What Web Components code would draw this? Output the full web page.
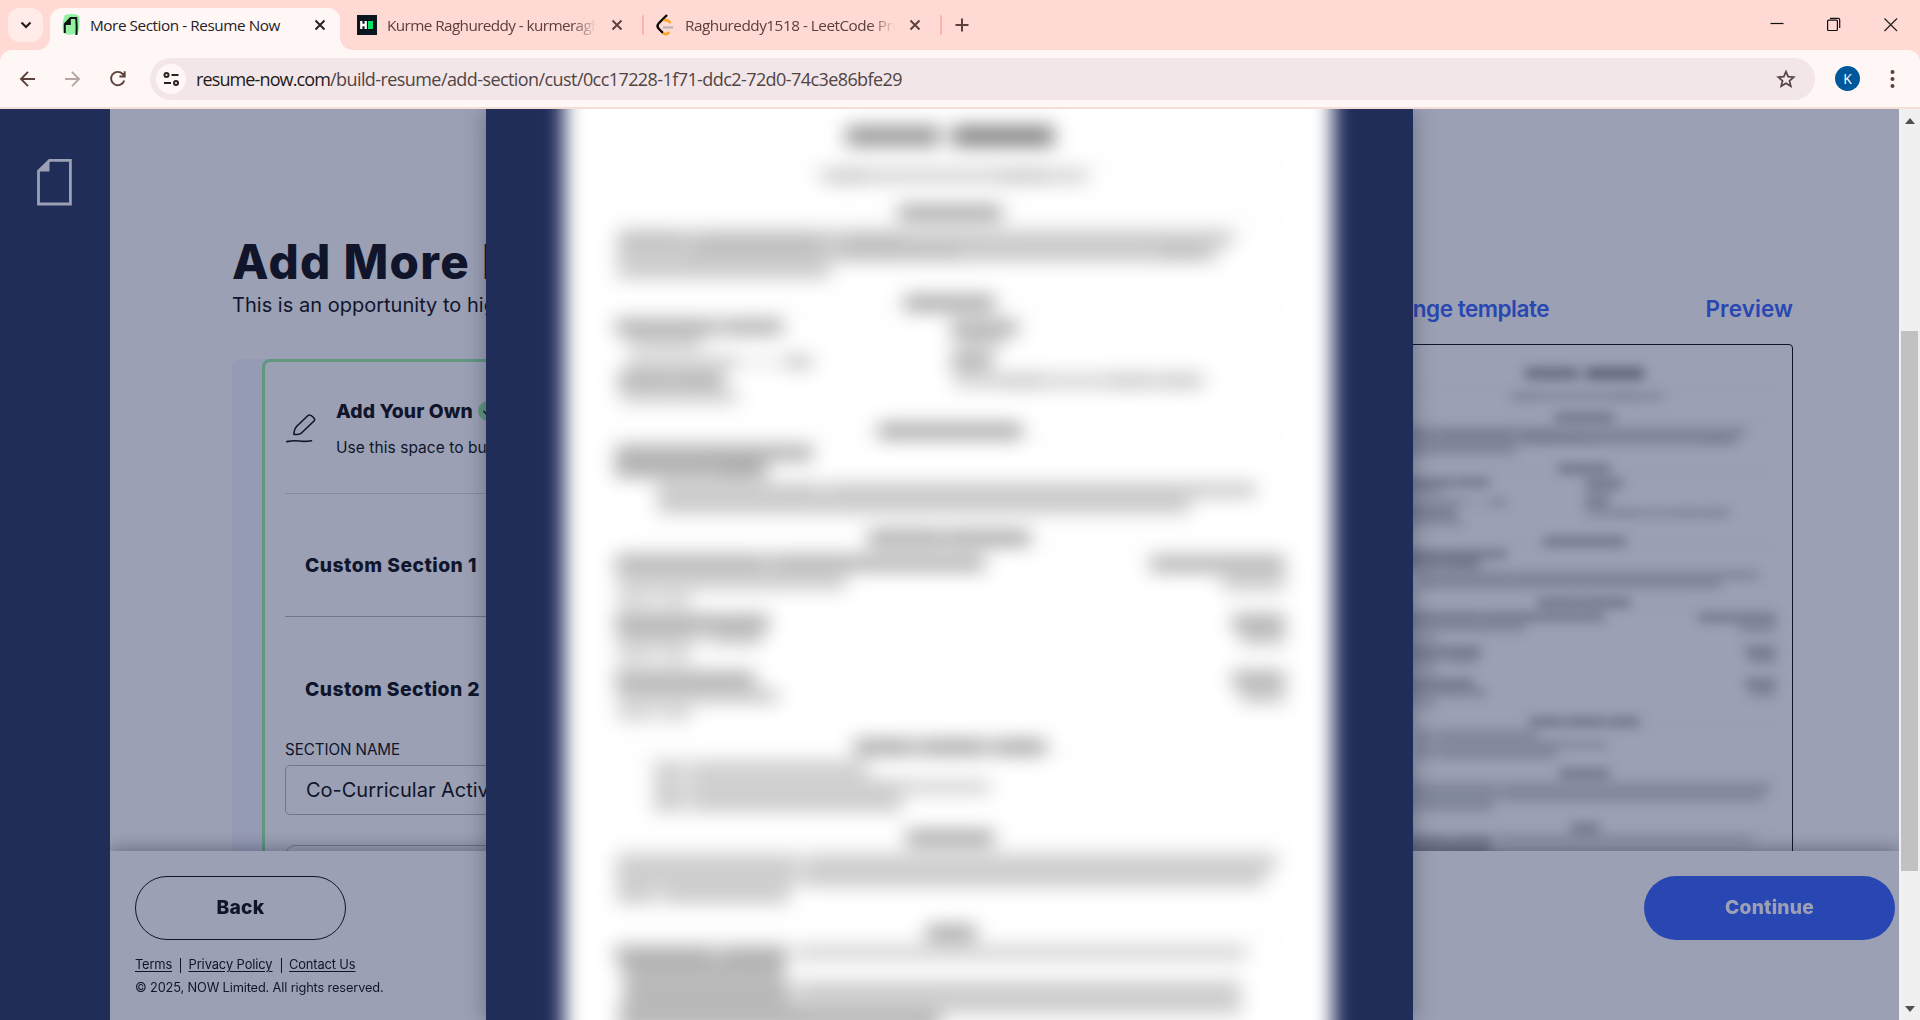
<!DOCTYPE html>
<html lang="en">
<head>
<meta charset="utf-8">
<title>More Section - Resume Now</title>
<style>
html,body{margin:0;padding:0;height:100%;overflow:hidden;background:#9ba0b4}
body{font-family:Inter,"Liberation Sans",sans-serif;color:#10152b}
</style>
</head>
<body>
<app-window></app-window>
<script>
const define=(name,html,after)=>{
  const t=document.createElement('template');
  t.innerHTML=html;
  customElements.define(name,class extends HTMLElement{
    constructor(){super();this.attachShadow({mode:'open'}).append(t.content.cloneNode(true));}
    connectedCallback(){if(after)after.call(this,this.shadowRoot);}
  });
};

/* One line of text, tracked so that it fills the width given in "w". */
define('fit-text',`<style>:host{display:inline-block;white-space:pre;flex:none}span{display:inline-block;text-decoration:inherit;text-underline-offset:inherit}</style><span><slot></slot></span>`,function(root){
  const w=+this.getAttribute('w'),n=this.textContent.length;
  const s=root.querySelector('span');
  if(w&&n){
    const natural=s.getBoundingClientRect().width;
    s.style.letterSpacing=((w-natural)/n)+'px';
  }
});

define('browser-tab',`<style>
:host{display:flex;align-items:center;height:42px;width:290px;box-sizing:border-box;padding:0 11px;color:#5b403c;font:15.300px/34px "Open Sans",sans-serif;position:relative;flex:none}
:host([active]){background:#fff7f5;color:#27201f;border-radius:12px 12px 0 0}
:host([active])::before,:host([active])::after{content:"";position:absolute;bottom:0;width:12px;height:12px}
:host([active])::before{left:-12px;background:radial-gradient(circle at 0 0,transparent 11.5px,#fff7f5 12px)}
:host([active])::after{right:-12px;background:radial-gradient(circle at 100% 0,transparent 11.5px,#fff7f5 12px)}
.icon{width:20px;height:34px;display:flex;align-items:center;justify-content:center;margin-bottom:8px}
.label{width:210px;margin:0 0 8px 9px;height:34px;overflow:hidden}
:host(:not([active])) .label{-webkit-mask-image:linear-gradient(90deg,#000 88%,transparent);mask-image:linear-gradient(90deg,#000 88%,transparent);margin-left:10px}
.x{margin:0 0 8px 14px;width:12px;height:12px}
</style><div class="icon"><slot name="icon"></slot></div><div class="label"><slot></slot></div>
<svg class="x" viewBox="0 0 12 12"><path d="M1.500 1.500l9 9M10.500 1.500l-9 9" stroke="currentColor" stroke-width="1.900"/></svg>`);

define('browser-chrome',`<style>
:host{display:block;height:109px;background:#ffd9d3}
.tabs{height:50px;display:flex;align-items:flex-start;padding-top:8px;box-sizing:border-box;position:relative}
.search{width:35px;height:34px;margin:0 7px 0 8px;border-radius:12px;background:#ffece9;display:flex;align-items:center;justify-content:center}
.sep{width:2px;height:20px;background:#ffb3a8;margin-top:7px;border-radius:1px}
.plus{margin:10px 0 0 13px}
.win{margin-left:auto;display:flex;padding:8px 22px 0 0;gap:43px}
.bar{height:57px;background:#fff7f5;border-radius:12px 12px 0 0;display:flex;align-items:center;padding:0 18px;box-sizing:border-box}
.line{height:2px;background:#f5ddd8}
.nav{display:flex;gap:25px;width:132px}
.omni{flex:none;width:1665px;height:42px;border-radius:21px;background:#f2e6e8;display:flex;align-items:center;box-sizing:border-box;padding:0 19px 0 6px;color:#514443;font:18px/40px "Open Sans",sans-serif}
.tune{width:30px;height:30px;border-radius:50%;background:#fff7f5;display:flex;align-items:center;justify-content:center;margin-right:10px}
.dom{color:#1f1a1a}
.star{margin-left:auto}
.k{width:25px;height:25px;border-radius:50%;background:#01579b;color:#fff;font:14px/25px "Open Sans",sans-serif;text-align:center;margin:0 30px 0 20px}
</style>
<div class="tabs">
 <div class="search"><svg width="12" height="12" viewBox="0 0 12 12"><path d="M1.500 3.500L6 8l4.500-4.500" fill="none" stroke="#241c1b" stroke-width="2.200"/></svg></div>
 <browser-tab active><svg slot="icon" width="20" height="24" viewBox="0 0 20 24"><path d="M4 2q7-2 13 0 2 2 1.500 9T17 20q-6 3-13 1-3-2-2.500-9T4 2z" fill="#92f0a2"/><path d="M3.800 20V11.200L9.500 5h5.700q.8 8 .3 17" fill="none" stroke="#0b1410" stroke-width="2"/><path d="M3.500 11L9.800 4.500V12H3.500z" fill="#0b1410"/></svg><fit-text w="190">More Section - Resume Now</fit-text></browser-tab>
 <browser-tab style="margin-left:7px;width:295px;padding-left:10px"><svg slot="icon" width="20" height="20" viewBox="0 0 20 20"><path d="M0 0h20v20H0z" fill="#0b151d"/><path d="M4.300 6v8M8.700 6v8M4 10h5" stroke="#fff" stroke-width="2.300"/><path d="M11 6h5v8h-5z" fill="#05e066"/></svg><fit-text w="213">Kurme Raghureddy - kurmeragh</fit-text></browser-tab>
 <div class="sep"></div>
 <browser-tab style="width:296px;padding-left:11px"><svg slot="icon" width="18" height="24" viewBox="0 0 18 24"><path d="M11 2L3 10q-3 3 0 6l4 4" fill="none" stroke="#080808" stroke-width="2.400"/><path d="M7 20q3 2.600 6.500-.8M8 7.500q3-1.500 6.500 2.500" fill="none" stroke="#ffa116" stroke-width="2.400"/><path d="M7 14.500h10" stroke="#b9b4b3" stroke-width="2.200"/></svg><fit-text w="216">Raghureddy1518 - LeetCode Pro</fit-text></browser-tab>
 <div class="sep"></div>
 <svg class="plus" width="14" height="14" viewBox="0 0 14 14"><path d="M7 .5v13M.5 7h13" stroke="#5b403c" stroke-width="2"/></svg>
 <div class="win">
  <svg width="14" height="16" viewBox="0 0 14 16"><path d="M.5 7.500h13" stroke="#111" stroke-width="1.200"/></svg>
  <svg width="14" height="16" viewBox="0 0 14 16"><path d="M.6 5.100q0-1 1-1h7.800q1 0 1 1v8.400q0 1-1 1H1.600q-1 0-1-1zM3 2.300h8.200q1.500 0 1.500 1.500v8.300" fill="none" stroke="#111" stroke-width="1.200"/></svg>
  <svg width="14" height="16" viewBox="0 0 14 16"><path d="M.5 2.500l12.500 12.500M13 2.500L.5 15" stroke="#222" stroke-width="1.200"/></svg>
 </div>
</div>
<div class="bar">
 <div class="nav">
  <svg width="20" height="20" viewBox="0 0 20 20"><path d="M17 10H3M10 2.800L3 10l7 7.200" fill="none" stroke="#5b403c" stroke-width="1.900"/></svg>
  <svg width="20" height="20" viewBox="0 0 20 20"><path d="M2 10h14M9 2.800l7 7.200-7 7.200" fill="none" stroke="#b5a6a3" stroke-width="1.900"/></svg>
  <svg width="20" height="20" viewBox="0 0 20 20"><path d="M16.200 11.400A6.700 6.700 0 1 1 14.700 5L16.500 7M16.700 2.300V7.500H11.400" fill="none" stroke="#5b403c" stroke-width="1.900"/></svg>
 </div>
 <div class="omni">
  <div class="tune"><svg width="17" height="16" viewBox="0 0 17 16"><g fill="none" stroke="#2b2221" stroke-width="2"><circle cx="3.500" cy="4" r="2"/><path d="M8.500 4h7M1 12h7"/><circle cx="13" cy="12" r="2"/></g></svg></div>
  <fit-text w="134" class="dom">resume-now.com</fit-text><fit-text w="572">/build-resume/add-section/cust/0cc17228-1f71-ddc2-72d0-74c3e86bfe29</fit-text>
  <svg class="star" width="20" height="20" viewBox="0 0 20 20"><path d="M10 2.600l2.200 5.100 5.500.5-4.200 3.600 1.300 5.400-4.800-2.900-4.800 2.900 1.300-5.400L2.300 8.200l5.500-.5z" fill="none" stroke="#514443" stroke-width="1.700"/></svg>
 </div>
 <div class="k">K</div>
 <svg width="5" height="20" viewBox="0 0 5 20"><g fill="#5b403c"><circle cx="2.500" cy="3" r="2"/><circle cx="2.500" cy="10" r="2"/><circle cx="2.500" cy="17" r="2"/></g></svg>
</div>
<div class="line"></div>`);

define('side-rail',`<style>:host{display:block;width:110px;background:#202d59;flex:none;padding:50px 0 0 37px;box-sizing:border-box}svg{display:block}</style>
<svg width="35" height="47" viewBox="0 0 35 47"><path d="M1.500 12L12.500 1.400H33.400V45H1.500z" fill="none" stroke="#9ba0b4" stroke-width="2.800"/><path d="M1.500 12L12.500 1.400V12.500H1.500z" fill="#9ba0b4"/></svg>`);

/* Soft strokes of a résumé page: [centre y, weight, x1, x2, x1, x2, ...]. */
const LINES=[
[136,'n',846,940],[136,'N',952,1054],
[176,'l',820,1088],[177,'t',832,866,1000,1044],
[213,'h',898,1002],
[238,'p',617,1234],[254,'p',617,1217],[271,'p',617,830],[238,'t',620,680,700,820,850,900],[253,'t',690,820,840,960,1160,1200],
[303,'h',904,995],
[327,'b',615,716,724,783],[343,'l',628,702],[362,'l',626,740],[362,'t',745,812],[362,'l',786,812],[380,'b',618,670,672,724],[397,'l',620,738],
[328,'b',951,1018],[344,'l',954,1002],[362,'b',951,992],[381,'l',954,1204],[380,'t',1112,1150,1162,1200,1000,1040],
[431,'h',878,1022],
[453,'b',615,813],[470,'b',615,767],[470,'t',720,762],
[490,'p',656,820,828,1256],[506,'p',658,1190],
[538,'h',868,942,947,1030],
[563,'b',615,766,772,985],[564,'b',1150,1285],[582,'p',617,846],[583,'p',1222,1285],[601,'l',617,650,664,690],
[622,'b',615,769],[638,'p',617,690,716,762],[656,'l',617,650,664,690],[622,'b',1232,1285],[638,'p',1240,1285],
[679,'b',615,755],[696,'p',617,778],[714,'l',617,650,664,690],[679,'b',1232,1285],[696,'p',1240,1285],
[747,'h',854,912,922,984,996,1046],
[769,'p',654,680,692,868],[787,'p',654,680,692,900],[787,'l',900,990],[804,'p',654,680,692,902],
[838,'h',906,994],
[862,'p',616,796,806,1277],[879,'p',616,796,806,1265],[896,'p',617,650,666,789],
[933,'h',926,976],
[954,'b',615,714,722,788],[953,'l',796,1246],[971,'b',622,785],[990,'b',624,790],[989,'p',796,1241],[1006,'p',619,1241],[1006,'t',626,790],[1022,'b',619,940]
];
const WEIGHT={n:[19,.44],N:[19,.53],h:[14,.4],b:[14,.36],p:[12,.27],l:[11,.23],t:[10,.09]};
define('resume-sheet',`<style>:host{display:block;overflow:hidden}svg{display:block;width:100%;height:100%;overflow:visible}</style><svg></svg>`,function(root){
  const svg=root.querySelector('svg');
  svg.setAttribute('viewBox',this.getAttribute('view'));
  const blur=this.getAttribute('soft');
  const page=this.hasAttribute('page')?'<rect x="564" y="20" width="769" height="1100" fill="#fff" style="filter:blur(9.500px)"/>':'';
  let r='';
  const bar=(x,x2,y,h,o)=>{r+=`<rect x="${x}" y="${y-h/2}" width="${x2-x}" height="${h}" opacity="${o}"/>`;};
  for(const [y,k,...xs] of LINES){
    const [h,o]=WEIGHT[k];
    for(let i=0;i<xs.length;i+=2){
      bar(xs[i],xs[i+1],y,h,o);
      if(k!=='t'&&xs[i+2])bar(xs[i+1],xs[i+2],y,h,o*.6);
    }
  }
  for(const y of [165,218,310,438,545,753,843,938])bar(618,1282,y,2,.06);
  svg.innerHTML=page+`<g fill="${this.getAttribute('ink')}" style="filter:blur(${blur})">${r}</g>`;
});

define('section-card',`<style>
:host{display:flex;width:1000px;height:700px;margin-left:122px;background:#959ab5;border-radius:8px;padding-left:30px;box-sizing:border-box;flex:none}
.box{flex:1;border:3px solid #61967f;border-radius:8px;background:#9ba0b4;padding-left:20px}
.top{height:131px;border-bottom:1px solid #858a9f;display:flex}
.pen{margin:52px 20px 0 1px}
.name{display:flex;align-items:center;gap:5px;height:28px;margin-top:35px}
.name fit-text,.row{font-weight:800;font-size:19.300px}
.desc{font-size:15.500px;line-height:22px;margin-top:12px}
.row{height:122px;line-height:143px;padding-left:20px;border-bottom:1px solid #71768c;overflow:hidden}
.row.last{border:0;height:121px;line-height:145px}
.lab{font-size:15.200px;line-height:20px;margin-top:2px;height:25px}
.field{border:1px solid #71768c;border-radius:5px;height:48px;font-size:20px;line-height:48px;padding-left:20px}
.next{border:1px solid #71768c;border-radius:10px;height:80px;margin-top:30px}
</style>
<div class="box">
 <div class="top">
  <svg class="pen" width="30" height="30" viewBox="0 0 30 30"><path d="M8 20.500Q7.500 16 10.500 12.500L22 1.500Q24-.2 27.500 3.500 29.500 5.500 28 7L15.500 19Q14 20.600 8 20.500zM.8 27.600Q8 26.200 13 27T25.500 26.800" fill="none" stroke="#10152b" stroke-width="1.600" stroke-linecap="round" stroke-linejoin="round"/></svg>
  <div><div class="name"><fit-text w="137">Add Your Own</fit-text><svg width="20" height="20" viewBox="0 0 20 20"><circle cx="10" cy="10" r="10" fill="#61967f"/><path d="M5.500 10l3 3 6-6" fill="none" stroke="#10152b" stroke-width="1.600"/></svg></div>
  <div class="desc"><fit-text w="132">Use this space to </fit-text>build</div></div>
 </div>
 <div class="row"><fit-text w="172">Custom Section 1</fit-text></div>
 <div class="row last"><fit-text w="175">Custom Section 2</fit-text></div>
 <div class="lab"><fit-text w="115">SECTION NAME</fit-text></div>
 <div class="field"><fit-text w="135">Co-Curricular </fit-text>Activities</div>
 <div class="next"></div>
</div>`);

define('preview-pane',`<style>
:host{display:block;position:absolute;left:1281px;top:0;width:402px}
nav{display:flex;justify-content:space-between;padding-top:185px;font-weight:600;font-size:22.500px;line-height:30px;color:#2847b2}
.frame{margin-top:20px;height:600px;border:1px solid #10152b;border-radius:4px;overflow:hidden}
resume-sheet{width:400px;height:600px}
</style>
<nav><fit-text w="178" style="margin-left:-20px">Change template</fit-text><fit-text w="87.500">Preview</fit-text></nav>
<div class="frame"><resume-sheet view="612.4 86 701.750 1052.600" soft="10px" ink="#1c2138"></resume-sheet></div>`);

define('action-footer',`<style>
:host{display:flex;justify-content:space-between;align-items:flex-start;height:169px;box-sizing:border-box;padding:25px 4px 0 25px;background:#9ba0b4;box-shadow:0 -2px 16px rgba(16,21,43,.38);position:relative;flex:none}
.btn{display:flex;align-items:center;justify-content:center;height:64px;box-sizing:border-box;border-radius:32px;font-weight:800;font-size:19.300px;padding-bottom:2px}
.back{width:211px;border:1px solid #10152b}
.go{width:251px;background:#2847b2;color:#9ba0b4}
.links{display:flex;align-items:center;font-size:12.900px;line-height:20px;margin-top:15px}
.links fit-text{text-decoration:underline;text-underline-offset:2px}
i{width:1px;height:15px;background:#10152b;margin:0 7.500px 0 8px}
.copy{font-size:12.800px;line-height:20px;margin-top:3px}
</style>
<div><div class="btn back"><fit-text w="48">Back</fit-text></div>
<div class="links"><fit-text w="37">Terms</fit-text><i></i><fit-text w="84">Privacy Policy</fit-text><i></i><fit-text w="66.500">Contact Us</fit-text></div>
<div class="copy"><fit-text w="248.500">© 2025, NOW Limited. All rights reserved.</fit-text></div></div>
<div class="btn go"><fit-text w="89">Continue</fit-text></div>`);

define('builder-page',`<style>
:host{display:flex;flex-direction:column;flex:1;min-width:0;background:#9ba0b4;overflow:hidden}
.body{flex:1;min-height:0;overflow:hidden;position:relative;display:flex;flex-direction:column}
h1{flex:none;margin:120px 0 0 122px;height:65px;font-weight:800;font-size:47.500px;line-height:66px;white-space:pre}
p{flex:none;margin:0 0 0 122px;height:65px;line-height:23px;font-size:20px;white-space:pre}
</style>
<div class="body">
 <h1><fit-text w="250">Add More </fit-text>Highlights</h1>
 <p><fit-text w="235">This is an opportunity to </fit-text>highlight</p>
 <section-card></section-card>
 <preview-pane></preview-pane>
</div>
<action-footer></action-footer>`);

define('page-scrollbar',`<style>
:host{display:flex;flex-direction:column;width:21px;background:#f0f0f0;flex:none;align-items:center;justify-content:space-between;padding:9px 0 8px;box-sizing:border-box}
.t{width:17px;height:540px;background:#c1c1c1;margin-top:207px;flex:none}
.g{flex:1}svg{display:block}
</style><svg width="10" height="6"><path d="M0 6L5 0l5 6z" fill="#505050"/></svg><div class="t"></div><div class="g"></div><svg width="10" height="6"><path d="M0 0l5 6 5-6z" fill="#505050"/></svg>`);

define('preview-modal',`<style>
:host{display:block;position:absolute;left:486px;top:0;width:927px;height:911px;background:#202d59;box-shadow:0 0 20px rgba(16,21,43,.36);overflow:hidden}
resume-sheet{width:927px;height:911px}
</style><resume-sheet page view="486 109 927 911" soft="9.500px" ink="#000"></resume-sheet>`);

define('app-window',`<style>
:host{display:flex;flex-direction:column;width:1920px;height:1020px;overflow:hidden}
main{display:flex;height:911px;position:relative;overflow:hidden}
</style><browser-chrome></browser-chrome>
<main><side-rail></side-rail><builder-page></builder-page><page-scrollbar></page-scrollbar><preview-modal></preview-modal></main>`);
</script>
</body>
</html>
